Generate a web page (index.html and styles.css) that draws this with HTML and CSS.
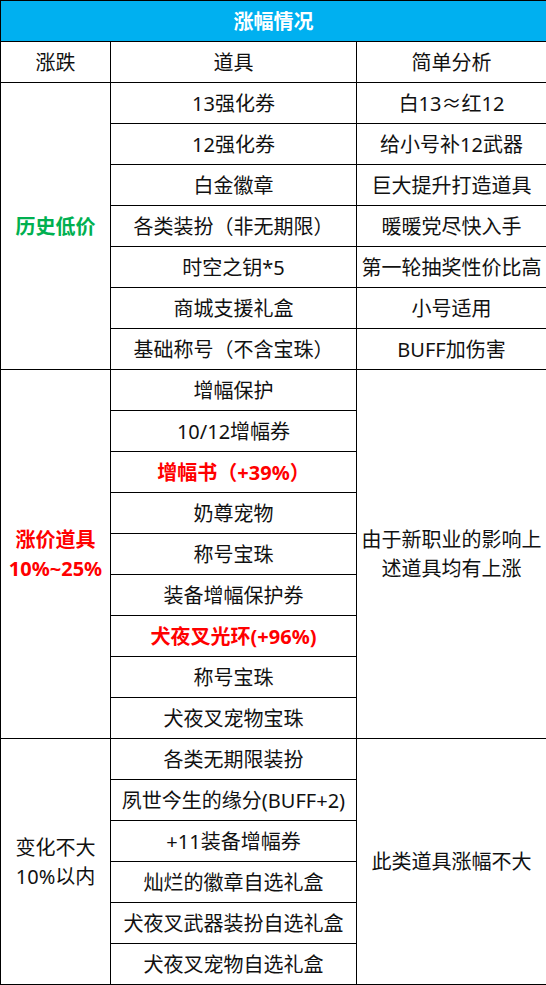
FILE: index.html
```html
<!DOCTYPE html>
<html lang="zh-CN">
<head>
<meta charset="utf-8">
<title>涨幅情况</title>
<link rel="stylesheet" href="styles.css">
</head>
<body>
<table class="sheet">
  <colgroup>
    <col class="c1">
    <col class="c2">
    <col class="c3">
  </colgroup>
  <tr class="title"><td colspan="3">涨幅情况</td></tr>
  <tr><td>涨跌</td><td>道具</td><td>简单分析</td></tr>
  <tr><td rowspan="7" class="green">历史低价</td><td>13强化券</td><td>白13≈红12</td></tr>
  <tr><td>12强化券</td><td>给小号补12武器</td></tr>
  <tr><td>白金徽章</td><td>巨大提升打造道具</td></tr>
  <tr><td>各类装扮（非无期限）</td><td>暖暖党尽快入手</td></tr>
  <tr><td>时空之钥*5</td><td>第一轮抽奖性价比高</td></tr>
  <tr><td>商城支援礼盒</td><td>小号适用</td></tr>
  <tr><td>基础称号（不含宝珠）</td><td>BUFF加伤害</td></tr>
  <tr><td rowspan="9" class="red">涨价道具<br>10%~25%</td><td>增幅保护</td><td rowspan="9" class="wrap">由于新职业的影响上述道具均有上涨</td></tr>
  <tr><td>10/12增幅券</td></tr>
  <tr><td class="red">增幅书（+39%）</td></tr>
  <tr><td>奶尊宠物</td></tr>
  <tr><td>称号宝珠</td></tr>
  <tr><td>装备增幅保护券</td></tr>
  <tr><td class="red">犬夜叉光环(+96%)</td></tr>
  <tr><td>称号宝珠</td></tr>
  <tr><td>犬夜叉宠物宝珠</td></tr>
  <tr><td rowspan="6">变化不大<br>10%以内</td><td>各类无期限装扮</td><td rowspan="6">此类道具涨幅不大</td></tr>
  <tr><td>夙世今生的缘分(BUFF+2)</td></tr>
  <tr><td>+11装备增幅券</td></tr>
  <tr><td>灿烂的徽章自选礼盒</td></tr>
  <tr><td>犬夜叉武器装扮自选礼盒</td></tr>
  <tr><td>犬夜叉宠物自选礼盒</td></tr>
</table>
</body>
</html>
```

FILE: styles.css
```css
html, body {
  margin: 0;
  padding: 0;
  background: #ffffff;
}
.sheet {
  border-collapse: collapse;
  width: 546px;
  table-layout: fixed;
  font-family: "Noto Sans", "Noto Sans CJK SC", sans-serif;
  font-size: 20px;
  color: #111111;
}
.c1 { width: 110px; }
.c2 { width: 246px; }
.c3 { width: 190px; }
.sheet tr { height: 41px; }
.sheet td {
  border: 1px solid #000000;
  text-align: center;
  vertical-align: middle;
  padding: 0 2px;
  line-height: 29px;
  white-space: nowrap;
}
.sheet td.wrap { white-space: normal; }
.title td {
  background: #00b0f0;
  color: #ffffff;
  font-weight: bold;
}
.green {
  color: #00b050;
  font-weight: bold;
}
.red {
  color: #ff0000;
  font-weight: bold;
}
```
